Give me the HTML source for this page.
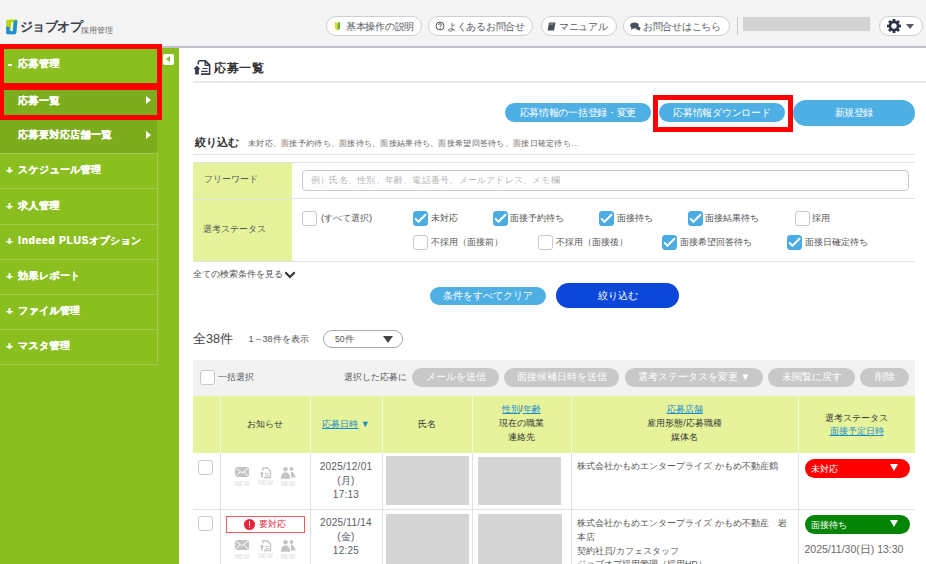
<!DOCTYPE html><html><head><meta charset="utf-8"><style>
*{box-sizing:border-box;margin:0;padding:0}
html,body{width:926px;height:564px;overflow:hidden;background:#fff;font-family:"Liberation Sans",sans-serif;color:#333}
div,span,svg{position:absolute}
.t{white-space:nowrap;line-height:1}
.pill{top:16px;height:19.5px;border:1.8px solid #cdcfd6;border-radius:10px;background:#fff}
.sb{text-shadow:0.35px 0 0 #fff}
.rb{border:5px solid #ff0000}
.btn{border-radius:10px;background:#4eafe4}
.gbtn{top:368px;height:19px;border-radius:9.5px;background:#c8c8c8}
.cb{width:15px;height:15px;border:1.5px solid #c6c8d0;border-radius:3px;background:#fff}
.cb.on{background:#4aace2;border-color:#4aace2}
.lbl{background:#e6f39b}
.lk{position:static;color:#1a8dd0;text-decoration:underline}
.gray{background:#d5d5d5}
</style></head><body>
<div style="left:0;top:0;width:926px;height:48px;background:#f4f4f4;border-bottom:2px solid #c0c2ca"></div>
<svg style="left:5px;top:18px" width="14" height="18" viewBox="0 0 14 18">
<defs><clipPath id="lg"><path d="M2.6 1.6 H11.2 Q12.6 1.6 12.4 3 L11.3 14.8 Q11.1 16.2 9.7 16.2 H2.6 Q1.1 16.2 1.2 14.8 L1.2 3.2 Q1.3 1.6 2.6 1.6 Z"/></clipPath></defs>
<g clip-path="url(#lg)">
<rect x="0" y="0" width="14" height="18" fill="#b5d80c"/>
<path d="M8.8 3.4 Q9.3 2.2 10.5 2.2 Q12 2.3 13 3 L14 18 H0 V9.4 Q0.8 8.4 2 8.6 Q3.4 8.8 4.6 9 L4.6 13 H7.8 Z" fill="#1a8fe3"/>
</g>
<path d="M7.2 5.2 L6.6 12.2" stroke="#fff" stroke-width="1.9" stroke-linecap="round"/>
</svg>
<div class="t" style="left:20px;top:19.5px;font-size:13px;color:#3c414c;font-weight:bold;letter-spacing:-0.6px">ジョブオプ</div>
<div class="t" style="left:81px;top:27px;font-size:7.7px;color:#666;">採用管理</div>
<div class="pill" style="left:326px;width:96px"></div>
<div class="t" style="left:346px;top:21.5px;font-size:10px;color:#555a63;letter-spacing:-0.3px">基本操作の説明</div>
<div class="pill" style="left:428px;width:105px"></div>
<div class="t" style="left:447px;top:21.5px;font-size:10px;color:#555a63;letter-spacing:-0.3px">よくあるお問合せ</div>
<div class="pill" style="left:541px;width:76px"></div>
<div class="t" style="left:559px;top:21.5px;font-size:10px;color:#555a63;letter-spacing:-0.3px">マニュアル</div>
<div class="pill" style="left:623px;width:107px"></div>
<div class="t" style="left:643px;top:21.5px;font-size:10px;color:#555a63;letter-spacing:-0.3px">お問合せはこちら</div>
<svg style="left:334px;top:21px" width="7" height="10" viewBox="0 0 7 10"><path d="M1 0.8 L3.5 2 V9.5 L1 7.8 Z" fill="#e8d51a"/><path d="M6 0.8 L3.5 2 V9.5 L6 7.8 Z" fill="#5cb531"/></svg>
<svg style="left:435px;top:21px" width="10" height="10" viewBox="0 0 10 10"><circle cx="5" cy="5" r="4" fill="none" stroke="#555a63" stroke-width="1"/><path d="M3.6 4 Q3.6 2.6 5 2.6 Q6.4 2.6 6.4 3.9 Q6.4 4.7 5.3 5.2 V6.2" fill="none" stroke="#555a63" stroke-width="1"/><circle cx="5.2" cy="7.6" r="0.6" fill="#555a63"/></svg>
<svg style="left:547px;top:22px" width="9" height="9" viewBox="0 0 9 9"><path d="M2 0.5 H8.5 L7 8.5 H0.5 Z" fill="#4a4f5c"/><path d="M2.5 2 H6.5" stroke="#bbb" stroke-width="0.8"/></svg>
<svg style="left:630px;top:22px" width="11" height="9" viewBox="0 0 11 9"><ellipse cx="4.5" cy="3.5" rx="4.3" ry="3" fill="#4a4f5c"/><path d="M1.5 5.5 L1 8 L4 6" fill="#4a4f5c"/><path d="M7 4.5 Q10.5 4.5 10.5 6.3 Q10.5 7.5 9.5 7.8 L10 8.8 L8 8 Q6.5 8 6 7" fill="#4a4f5c"/></svg>
<div style="left:737px;top:17px;width:1px;height:18px;background:#c9c9c9"></div>
<div style="left:743px;top:17px;width:127px;height:14px;background:#d3d3d3"></div>
<div class="pill" style="left:879px;width:44px"></div>
<svg style="left:887px;top:19px" width="14" height="14" viewBox="0 0 14 14"><g fill="#2f3446"><circle cx="7" cy="7" r="5.4"/>
<rect x="5.6" y="0" width="2.8" height="14"/><rect x="0" y="5.6" width="14" height="2.8"/>
<rect x="5.6" y="0" width="2.8" height="14" transform="rotate(45 7 7)"/><rect x="5.6" y="0" width="2.8" height="14" transform="rotate(-45 7 7)"/></g>
<circle cx="7" cy="7" r="2.7" fill="#fff"/></svg>
<div style="left:905.5px;top:23.5px;width:0;height:0;border-left:4.5px solid transparent;border-right:4.5px solid transparent;border-top:5.5px solid #555a66"></div>
<div style="left:0;top:48px;width:179px;height:516px;background:#8bbf1f"></div>
<div style="left:0;top:84px;width:157px;height:69px;background:#7dac1d"></div>
<div style="left:7.6px;top:63.7px;width:4px;height:2px;background:#fff"></div>
<div class="t" style="left:18px;top:59px;font-size:10px;color:#fff;font-weight:bold;letter-spacing:0.4px;text-shadow:0.35px 0 0 #fff">応募管理</div>
<div class="t" style="left:18px;top:95.5px;font-size:10px;color:#fff;font-weight:bold;letter-spacing:0.4px;text-shadow:0.35px 0 0 #fff">応募一覧</div>
<div class="t" style="left:18px;top:129.5px;font-size:10px;color:#fff;font-weight:bold;letter-spacing:0.4px;text-shadow:0.35px 0 0 #fff">応募要対応店舗一覧</div>
<div style="left:146px;top:96px;width:0;height:0;border-top:4.5px solid transparent;border-bottom:4.5px solid transparent;border-left:5.5px solid #fff"></div>
<div style="left:146px;top:131px;width:0;height:0;border-top:4.5px solid transparent;border-bottom:4.5px solid transparent;border-left:5.5px solid #fff"></div>
<div style="left:0;top:153px;width:158px;height:36px;border:1px solid #a2cb4e;border-left:none"></div>
<div class="t" style="left:6px;top:164.5px;font-size:11px;color:#fff;font-weight:bold;text-shadow:0.4px 0 0 #fff">+</div>
<div class="t" style="left:18px;top:164.5px;font-size:10px;color:#fff;font-weight:bold;letter-spacing:0.4px;text-shadow:0.35px 0 0 #fff">スケジュール管理</div>
<div style="left:0;top:188px;width:158px;height:37px;border:1px solid #a2cb4e;border-left:none"></div>
<div class="t" style="left:6px;top:200.5px;font-size:11px;color:#fff;font-weight:bold;text-shadow:0.4px 0 0 #fff">+</div>
<div class="t" style="left:18px;top:200.5px;font-size:10px;color:#fff;font-weight:bold;letter-spacing:0.4px;text-shadow:0.35px 0 0 #fff">求人管理</div>
<div style="left:0;top:224px;width:158px;height:36px;border:1px solid #a2cb4e;border-left:none"></div>
<div class="t" style="left:6px;top:235.5px;font-size:11px;color:#fff;font-weight:bold;text-shadow:0.4px 0 0 #fff">+</div>
<div class="t" style="left:18px;top:235.5px;font-size:10px;color:#fff;font-weight:bold;letter-spacing:0.4px;text-shadow:0.35px 0 0 #fff"><span style="position:static;letter-spacing:0.85px">Indeed PLUS</span>オプション</div>
<div style="left:0;top:259px;width:158px;height:36px;border:1px solid #a2cb4e;border-left:none"></div>
<div class="t" style="left:6px;top:270.5px;font-size:11px;color:#fff;font-weight:bold;text-shadow:0.4px 0 0 #fff">+</div>
<div class="t" style="left:18px;top:270.5px;font-size:10px;color:#fff;font-weight:bold;letter-spacing:0.4px;text-shadow:0.35px 0 0 #fff">効果レポート</div>
<div style="left:0;top:294px;width:158px;height:36px;border:1px solid #a2cb4e;border-left:none"></div>
<div class="t" style="left:6px;top:305.5px;font-size:11px;color:#fff;font-weight:bold;text-shadow:0.4px 0 0 #fff">+</div>
<div class="t" style="left:18px;top:305.5px;font-size:10px;color:#fff;font-weight:bold;letter-spacing:0.4px;text-shadow:0.35px 0 0 #fff">ファイル管理</div>
<div style="left:0;top:329px;width:158px;height:36px;border:1px solid #a2cb4e;border-left:none"></div>
<div class="t" style="left:6px;top:340.5px;font-size:11px;color:#fff;font-weight:bold;text-shadow:0.4px 0 0 #fff">+</div>
<div class="t" style="left:18px;top:340.5px;font-size:10px;color:#fff;font-weight:bold;letter-spacing:0.4px;text-shadow:0.35px 0 0 #fff">マスタ管理</div>
<div class="rb" style="left:-1px;top:44px;width:163px;height:44px"></div>
<div class="rb" style="left:-1px;top:85px;width:163px;height:35px"></div>
<div style="left:163px;top:54px;width:11px;height:11px;background:#fff;border-radius:2px"></div>
<div style="left:166px;top:56px;width:0;height:0;border-top:3.5px solid transparent;border-bottom:3.5px solid transparent;border-right:4.5px solid #8bbf1f"></div>
<svg style="left:193px;top:60px" width="18" height="15" viewBox="0 0 18 15">
 <path d="M5.3 4.6 V2.3 Q5.3 0.8 6.8 0.8 H12.4 L16.6 4.9 V14.1 H8" fill="none" stroke="#363c4c" stroke-width="1.6"/>
 <path d="M12.2 1.2 V5.3 H16.3 Z" fill="none" stroke="#363c4c" stroke-width="1.3" stroke-linejoin="round"/>
 <path d="M9.4 8.5 H14.7 M8.2 11.4 H14.7" stroke="#363c4c" stroke-width="1.2"/>
 <path d="M3.9 5.4 L0.3 9.2 H2.1 V14.6 H5.9 V9.2 H7.5 Z" fill="#363c4c"/>
</svg>
<div class="t" style="left:214px;top:61.5px;font-size:12px;color:#333;font-weight:bold;letter-spacing:0.5px">応募一覧</div>
<div style="left:193px;top:81px;width:733px;height:2px;background:#e8e9ec"></div>
<div class="btn" style="left:505px;top:103px;width:146px;height:19px;border-radius:9.5px;background:#4eafe4"></div>
<div class="t" style="left:505px;top:107.8px;font-size:10px;color:#fff;width:146px;text-align:center;letter-spacing:-0.33px;text-indent:-0.33px">応募情報の一括登録・変更</div>
<div class="btn" style="left:659px;top:103px;width:126px;height:19px;border-radius:9.5px;background:#4eafe4"></div>
<div class="t" style="left:659px;top:107.8px;font-size:10px;color:#fff;width:126px;text-align:center;letter-spacing:-0.23px;text-indent:-0.23px">応募情報ダウンロード</div>
<div class="btn" style="left:793px;top:100px;width:122px;height:26px;border-radius:13.0px;background:#4eafe4"></div>
<div class="t" style="left:793px;top:108.3px;font-size:10px;color:#fff;width:122px;text-align:center;letter-spacing:-0.35px;text-indent:-0.35px">新規登録</div>
<div class="rb" style="left:653px;top:95px;width:140px;height:37px"></div>
<div class="t" style="left:194.5px;top:137px;font-size:11px;color:#333;font-weight:bold;">絞り込む</div>
<div class="t" style="left:248px;top:140px;font-size:8px;color:#666;letter-spacing:0.28px">未対応、面接予約待ち、面接待ち、面接結果待ち、面接希望回答待ち、面接日確定待ち…</div>
<div style="left:193px;top:154px;width:722px;height:1px;background:#e2e2e2"></div>
<div style="left:193px;top:162px;width:722px;height:1px;background:#e2e2e2"></div>
<div class="lbl" style="left:193px;top:163px;width:99px;height:35px"></div>
<div class="t" style="left:204px;top:175px;font-size:9.1px;color:#555;">フリーワード</div>
<div style="left:302px;top:169.5px;width:607px;height:21.5px;border:1.5px solid #cacaca;border-radius:4px"></div>
<div class="t" style="left:311px;top:176px;font-size:9px;color:#b8b8b8;letter-spacing:0.22px">例）氏名、性別、年齢、電話番号、メールアドレス、メモ欄</div>
<div style="left:193px;top:198px;width:722px;height:1px;background:#e2e2e2"></div>
<div class="lbl" style="left:193px;top:199px;width:99px;height:62px"></div>
<div class="t" style="left:203px;top:224.5px;font-size:9.0px;color:#555;">選考ステータス</div>
<div style="left:193px;top:261px;width:722px;height:1px;background:#e2e2e2"></div>
<div class="cb" style="left:302px;top:211px"></div>
<div class="t" style="left:321px;top:214px;font-size:9.3px;color:#555;">(すべて選択)</div>
<div class="cb on" style="left:413px;top:211px"><svg width="15" height="15" viewBox="0 0 15 15" style="left:-1px;top:-1px"><path d="M2.2 7.3 L5.4 10.8 L13 3.2" fill="none" stroke="#fff" stroke-width="2"/></svg></div>
<div class="t" style="left:431px;top:214px;font-size:9.3px;color:#555;">未対応</div>
<div class="cb on" style="left:493px;top:211px"><svg width="15" height="15" viewBox="0 0 15 15" style="left:-1px;top:-1px"><path d="M2.2 7.3 L5.4 10.8 L13 3.2" fill="none" stroke="#fff" stroke-width="2"/></svg></div>
<div class="t" style="left:510px;top:214px;font-size:9.3px;color:#555;">面接予約待ち</div>
<div class="cb on" style="left:599px;top:211px"><svg width="15" height="15" viewBox="0 0 15 15" style="left:-1px;top:-1px"><path d="M2.2 7.3 L5.4 10.8 L13 3.2" fill="none" stroke="#fff" stroke-width="2"/></svg></div>
<div class="t" style="left:617px;top:214px;font-size:9.3px;color:#555;">面接待ち</div>
<div class="cb on" style="left:688px;top:211px"><svg width="15" height="15" viewBox="0 0 15 15" style="left:-1px;top:-1px"><path d="M2.2 7.3 L5.4 10.8 L13 3.2" fill="none" stroke="#fff" stroke-width="2"/></svg></div>
<div class="t" style="left:705px;top:214px;font-size:9.3px;color:#555;">面接結果待ち</div>
<div class="cb" style="left:795px;top:211px"></div>
<div class="t" style="left:812px;top:214px;font-size:9.3px;color:#555;">採用</div>
<div class="cb" style="left:413px;top:235px"></div>
<div class="t" style="left:431px;top:238px;font-size:9.3px;color:#555;">不採用（面接前）</div>
<div class="cb" style="left:538px;top:235px"></div>
<div class="t" style="left:556px;top:238px;font-size:9.3px;color:#555;">不採用（面接後）</div>
<div class="cb on" style="left:662px;top:235px"><svg width="15" height="15" viewBox="0 0 15 15" style="left:-1px;top:-1px"><path d="M2.2 7.3 L5.4 10.8 L13 3.2" fill="none" stroke="#fff" stroke-width="2"/></svg></div>
<div class="t" style="left:680px;top:238px;font-size:9.3px;color:#555;">面接希望回答待ち</div>
<div class="cb on" style="left:787px;top:235px"><svg width="15" height="15" viewBox="0 0 15 15" style="left:-1px;top:-1px"><path d="M2.2 7.3 L5.4 10.8 L13 3.2" fill="none" stroke="#fff" stroke-width="2"/></svg></div>
<div class="t" style="left:805px;top:238px;font-size:9.3px;color:#555;">面接日確定待ち</div>
<div class="t" style="left:193px;top:270px;font-size:9px;color:#555;">全ての検索条件を見る</div>
<svg style="left:284px;top:271px" width="12" height="9" viewBox="0 0 12 9"><path d="M1.3 1.3 L6 6 L10.7 1.3" fill="none" stroke="#333" stroke-width="2.1"/></svg>
<div class="btn" style="left:430px;top:287px;width:116px;height:18px;border-radius:9.0px;background:#4eafe4"></div>
<div class="t" style="left:430px;top:291.40000000000003px;font-size:9.8px;color:#fff;width:116px;text-align:center;letter-spacing:0px;text-indent:0px">条件をすべてクリア</div>
<div class="btn" style="left:556px;top:283px;width:123px;height:25px;border-radius:12.5px;background:#0b47d8"></div>
<div class="t" style="left:556px;top:290.90000000000003px;font-size:9.8px;color:#fff;width:123px;text-align:center;letter-spacing:0px;text-indent:0px">絞り込む</div>
<div class="t" style="left:193px;top:332.5px;font-size:12.6px;color:#444;">全38件</div>
<div class="t" style="left:248.5px;top:335px;font-size:9.07px;color:#555;">1～38件を表示</div>
<div style="left:323px;top:330px;width:80px;height:18px;border:1px solid #a9a9a9;border-radius:9px"></div>
<div class="t" style="left:335px;top:335px;font-size:8.7px;color:#555;">50件</div>
<div style="left:383px;top:335.5px;width:0;height:0;border-left:5px solid transparent;border-right:5px solid transparent;border-top:7px solid #444"></div>
<div style="left:193px;top:359.5px;width:722px;height:36.5px;background:#f2f2f3"></div>
<div class="cb" style="left:200px;top:370px"></div>
<div class="t" style="left:218px;top:373px;font-size:9.2px;color:#555;">一括選択</div>
<div class="t" style="left:344px;top:373px;font-size:9.2px;color:#555;">選択した応募に</div>
<div class="gbtn" style="left:412px;width:87px"></div>
<div class="t" style="left:412px;top:372px;font-size:9.8px;color:#fff;width:87px;text-align:center">メールを送信</div>
<div class="gbtn" style="left:504px;width:115px"></div>
<div class="t" style="left:504px;top:372px;font-size:9.8px;color:#fff;width:115px;text-align:center">面接候補日時を送信</div>
<div class="gbtn" style="left:625px;width:138px"></div>
<div class="t" style="left:625px;top:372px;font-size:9.8px;color:#fff;width:138px;text-align:center">選考ステータスを変更 ▼</div>
<div class="gbtn" style="left:768px;width:87px"></div>
<div class="t" style="left:768px;top:372px;font-size:9.8px;color:#fff;width:87px;text-align:center">未閲覧に戻す</div>
<div class="gbtn" style="left:860px;width:49px"></div>
<div class="t" style="left:860px;top:372px;font-size:9.8px;color:#fff;width:49px;text-align:center">削除</div>
<div class="lbl" style="left:193px;top:396px;width:722px;height:57px"></div>
<div style="left:220px;top:396px;width:1px;height:57px;background:#f5f9e0"></div>
<div style="left:220px;top:453px;width:1px;height:111px;background:#e2e2e2"></div>
<div style="left:310px;top:396px;width:1px;height:57px;background:#f5f9e0"></div>
<div style="left:310px;top:453px;width:1px;height:111px;background:#e2e2e2"></div>
<div style="left:382px;top:396px;width:1px;height:57px;background:#f5f9e0"></div>
<div style="left:382px;top:453px;width:1px;height:111px;background:#e2e2e2"></div>
<div style="left:472px;top:396px;width:1px;height:57px;background:#f5f9e0"></div>
<div style="left:472px;top:453px;width:1px;height:111px;background:#e2e2e2"></div>
<div style="left:571px;top:396px;width:1px;height:57px;background:#f5f9e0"></div>
<div style="left:571px;top:453px;width:1px;height:111px;background:#e2e2e2"></div>
<div style="left:798px;top:396px;width:1px;height:57px;background:#f5f9e0"></div>
<div style="left:798px;top:453px;width:1px;height:111px;background:#e2e2e2"></div>
<div style="left:193px;top:509px;width:722px;height:1px;background:#e2e2e2"></div>
<div class="t" style="left:220px;top:418px;width:90px;text-align:center;font-size:9px;line-height:13.9px;color:#333">お知らせ</div>
<div class="t" style="left:310px;top:418px;width:72px;text-align:center;font-size:9px;line-height:13.9px;color:#333"><span class="lk">応募日時</span> <span style="position:static;color:#1a8dd0">▼</span></div>
<div class="t" style="left:382px;top:418px;width:90px;text-align:center;font-size:9px;line-height:13.9px;color:#333">氏名</div>
<div class="t" style="left:472px;top:403px;width:99px;text-align:center;font-size:9px;line-height:13.9px;color:#333"><span class="lk">性別</span>/<span class="lk">年齢</span><br>現在の職業<br>連絡先</div>
<div class="t" style="left:571px;top:403px;width:227px;text-align:center;font-size:9px;line-height:13.9px;color:#333"><span class="lk">応募店舗</span><br>雇用形態/応募職種<br>媒体名</div>
<div class="t" style="left:798px;top:411.5px;width:117px;text-align:center;font-size:9px;line-height:13.9px;color:#333">選考ステータス<br><span class="lk">面接予定日時</span></div>
<div class="cb" style="left:198px;top:460px"></div>
<div class="cb" style="left:198px;top:516px"></div>
<div class="t" style="left:310px;top:460.3px;width:72px;text-align:center;font-size:10px;letter-spacing:0.25px;line-height:13.9px;color:#585c66">2025/12/01<br>(月)<br>17:13</div>
<div class="t" style="left:310px;top:516.3px;width:72px;text-align:center;font-size:10px;letter-spacing:0.25px;line-height:13.9px;color:#585c66">2025/11/14<br>(金)<br>12:25</div>
<div class="gray" style="left:386px;top:456px;width:83px;height:48.5px"></div>
<div class="gray" style="left:478px;top:457px;width:83px;height:48px"></div>
<div class="gray" style="left:386px;top:514px;width:83px;height:50px"></div>
<div class="gray" style="left:478px;top:514px;width:84px;height:50px"></div>
<div class="t" style="left:577px;top:462px;font-size:9px;color:#555;">株式会社かもめエンタープライズ かもめ不動産鶴</div>
<div class="t" style="left:577px;top:517px;font-size:9px;line-height:13.8px;color:#555">株式会社かもめエンタープライズ かもめ不動産　岩<br>本店<br>契約社員/カフェスタッフ<br>ジョブオプ採用管理（採用HP）</div>
<div style="left:805px;top:459px;width:105px;height:19px;border-radius:9.5px;background:#ff0000"></div>
<div class="t" style="left:811px;top:464.5px;font-size:8.9px;color:#fff;">未対応</div>
<div style="left:890.3px;top:464.3px;width:0;height:0;border-left:4.8px solid transparent;border-right:4.8px solid transparent;border-top:7.8px solid #fff"></div>
<div style="left:805px;top:515px;width:105px;height:19px;border-radius:9.5px;background:#058505"></div>
<div class="t" style="left:811px;top:520.5px;font-size:8.9px;color:#fff;">面接待ち</div>
<div style="left:890.3px;top:520.3px;width:0;height:0;border-left:4.8px solid transparent;border-right:4.8px solid transparent;border-top:7.8px solid #fff"></div>
<div class="t" style="left:804.5px;top:544px;font-size:10.5px;color:#6a6a6a;">2025/11/30(日) 13:30</div>
<div style="left:226px;top:516px;width:79px;height:17px;border:1px solid #f05a5a;background:#fff"></div>
<div style="left:244px;top:519px;width:11px;height:11px;border-radius:50%;background:#e8243a"></div>
<div style="left:248.8px;top:521px;width:1.6px;height:4.5px;background:#fff"></div>
<div style="left:248.8px;top:526.5px;width:1.6px;height:1.6px;background:#fff"></div>
<div class="t" style="left:259px;top:520px;font-size:9.3px;color:#e8243a;">要対応</div>
<svg style="left:233px;top:467px" width="66" height="20" viewBox="0 0 66 20">
<rect x="2" y="0" width="14" height="10" fill="#c4c4c4"/><path d="M2 0.3 L9 6 L16 0.3 M2 10 L7 5 M16 10 L11 5" stroke="#fff" stroke-width="1" fill="none"/>
<path d="M30 3.5 V1 H34.5 L37.5 4 V10.5 H31" fill="none" stroke="#c4c4c4" stroke-width="1.3"/><path d="M32 6.5 H36 M32 8.5 H36" stroke="#c4c4c4" stroke-width="0.9"/><path d="M28.8 4.5 L26.5 7 H28 V10.5 H29.8 V7 H31.2 Z" fill="#c4c4c4"/>
<circle cx="52.5" cy="2.3" r="2.2" fill="#c4c4c4"/><circle cx="58.5" cy="2" r="2" fill="#c4c4c4"/><path d="M47.8 11.8 Q48 5.3 52.5 5.3 Q57 5.3 57.2 11.8 Z" fill="#c4c4c4"/><path d="M57.8 4.8 Q61.5 4.8 62.5 10.5 H58" fill="#c4c4c4"/>
<text x="9" y="18.5" font-size="6.3" fill="#d9d9d9" text-anchor="middle" font-family="Liberation Sans">NEW</text>
<text x="32.5" y="18" font-size="6.3" fill="#d9d9d9" text-anchor="middle" font-family="Liberation Sans">NEW</text>
<text x="55" y="18.5" font-size="6.3" fill="#d9d9d9" text-anchor="middle" font-family="Liberation Sans">NEW</text>
</svg>
<svg style="left:233px;top:540px" width="66" height="20" viewBox="0 0 66 20">
<rect x="2" y="0" width="14" height="10" fill="#c4c4c4"/><path d="M2 0.3 L9 6 L16 0.3 M2 10 L7 5 M16 10 L11 5" stroke="#fff" stroke-width="1" fill="none"/>
<path d="M30 3.5 V1 H34.5 L37.5 4 V10.5 H31" fill="none" stroke="#c4c4c4" stroke-width="1.3"/><path d="M32 6.5 H36 M32 8.5 H36" stroke="#c4c4c4" stroke-width="0.9"/><path d="M28.8 4.5 L26.5 7 H28 V10.5 H29.8 V7 H31.2 Z" fill="#c4c4c4"/>
<circle cx="52.5" cy="2.3" r="2.2" fill="#c4c4c4"/><circle cx="58.5" cy="2" r="2" fill="#c4c4c4"/><path d="M47.8 11.8 Q48 5.3 52.5 5.3 Q57 5.3 57.2 11.8 Z" fill="#c4c4c4"/><path d="M57.8 4.8 Q61.5 4.8 62.5 10.5 H58" fill="#c4c4c4"/>
<text x="9" y="18.5" font-size="6.3" fill="#d9d9d9" text-anchor="middle" font-family="Liberation Sans">NEW</text>
<text x="32.5" y="18" font-size="6.3" fill="#d9d9d9" text-anchor="middle" font-family="Liberation Sans">NEW</text>
<text x="55" y="18.5" font-size="6.3" fill="#d9d9d9" text-anchor="middle" font-family="Liberation Sans">NEW</text>
</svg>
</body></html>
